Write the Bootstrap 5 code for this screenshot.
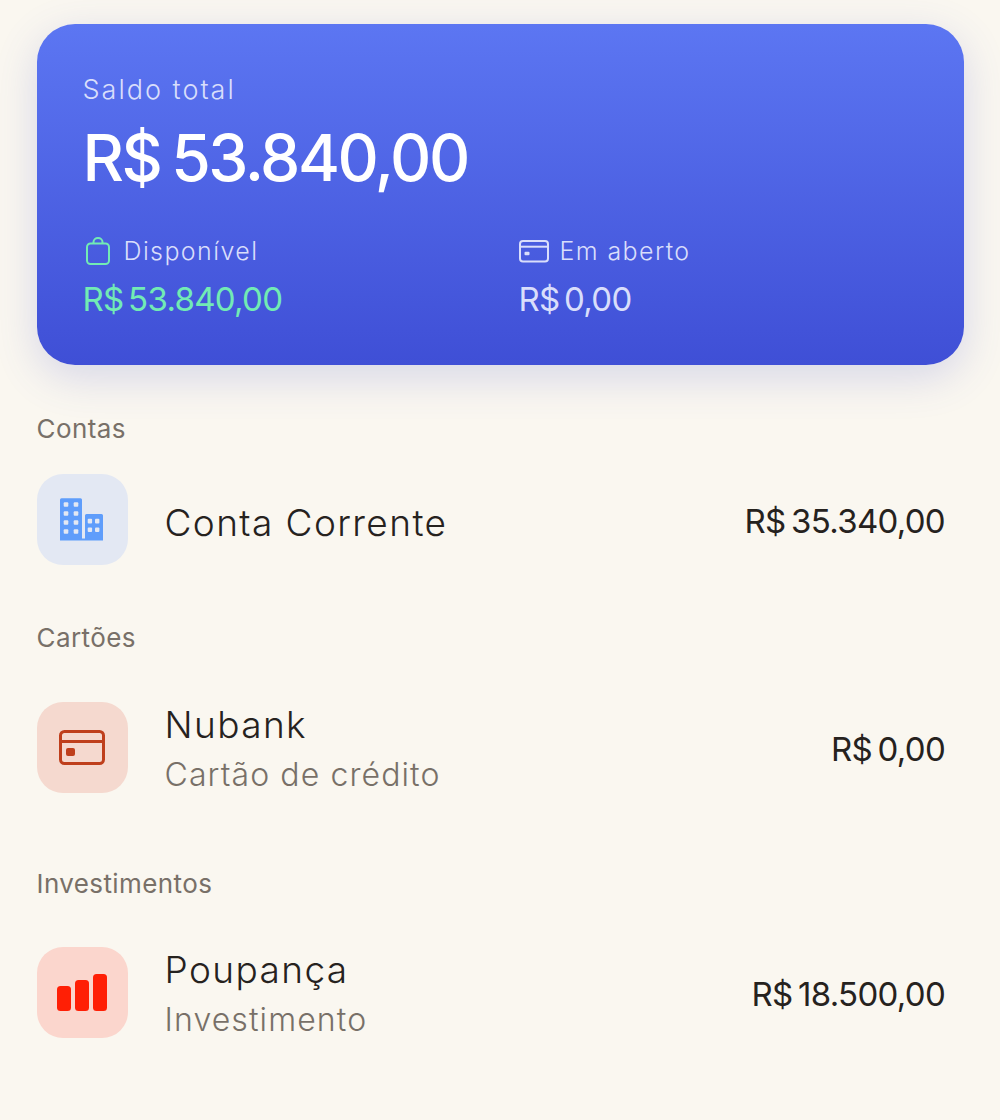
<!DOCTYPE html>
<html lang="pt-BR">
<head>
    <meta charset="UTF-8">
    <meta name="viewport" content="width=device-width, initial-scale=1.0">
    <title>Saldo</title>
    <link href="https://cdn.jsdelivr.net/npm/bootstrap@5.3.0/dist/css/bootstrap.min.css" rel="stylesheet">
    <style>
        body {
            background: #faf7f0;
            font-family: Inter, "Liberation Sans", sans-serif;
            color: #26221e;
        }
        .page-wrap { padding: 24px 36px 0 36.5px; width: 1000px; height: 1120px; overflow: hidden; }

        /* cartao do saldo */
        .balance-card {
            height: 341px;
            border-radius: 38px;
            padding: 47px 46px 0;
            background: linear-gradient(180deg, #5c76f2 0%, #3f4fd6 100%);
            box-shadow: 0 12px 44px rgba(70, 85, 200, .2);
            color: #fff;
        }
        .balance-label { font-size: 27px; line-height: 38px; font-weight: 300; letter-spacing: 2px; color: #d9defb; }
        .balance-total { font-size: 64px; line-height: 76px; font-weight: 500; letter-spacing: -2.4px; word-spacing: -4px; margin-top: 11px; }
        .balance-cols { margin-top: 38px; }
        .balance-col { width: 436px; flex: none; }
        .col-label { font-size: 25px; line-height: 34px; font-weight: 300; letter-spacing: 1.4px; color: #d9defb; }
        .col-label svg { flex: none; }
        .col-label span { margin-left: 3px; }
        .col-value { font-size: 33px; line-height: 44px; font-weight: 400; letter-spacing: -.7px; word-spacing: -4px; margin-top: 9px; color: #d9defb; }
        .col-value.is-green { color: #72ebb4; }

        /* listas */
        .group-label { font-size: 26px; line-height: 32px; font-weight: 400; letter-spacing: .4px; color: #787068; }
        .group-contas { margin-top: 48px; }
        .group-cartoes { margin-top: 57px; }
        .group-invest { margin-top: 75px; }
        .acc-row { padding-right: 19px; }
        .acc-row.first { margin-top: 29px; }
        .acc-row.next { margin-top: 48px; }
        .acc-row.last { margin-top: 47px; }
        .acc-icon { width: 91px; height: 91px; border-radius: 26px; flex: none; margin-right: 37px; }
        .acc-icon.blue { background: #e3e8f3; }
        .acc-icon.peach { background: #f5d9cf; }
        .acc-icon.red { background: #fbd6cd; }
        .acc-name { font-size: 37px; line-height: 46px; font-weight: 300; letter-spacing: 1.4px; color: #26221e; }
        .acc-name.solo { padding-top: 6px; }
        .acc-text { height: 91px; }
        .acc-sub { font-size: 32px; line-height: 42px; font-weight: 300; letter-spacing: 1.1px; color: #787068; margin-top: 6px; }
        .acc-value { font-size: 33px; font-weight: 440; letter-spacing: -.7px; word-spacing: -3px; padding-top: 4px; color: #26221e; }
    </style>
</head>
<body>
    <div class="page-wrap">
        <div class="balance-card">
            <div class="balance-label">Saldo total</div>
            <div class="balance-total">R$ 53.840,00</div>
            <div class="balance-cols d-flex">
                <div class="balance-col">
                    <div class="col-label d-flex align-items-center gap-2">
                        <svg width="30" height="30" viewBox="0 0 30 30" fill="none" stroke="#72ebb4" stroke-width="2"><rect x="4" y="7.500" width="22" height="20.500" rx="3.500"/><path d="M10.500 7.500V6a4.500 4 0 0 1 9 0V7.500"/></svg>
                        <span>Disponível</span>
                    </div>
                    <div class="col-value is-green">R$ 53.840,00</div>
                </div>
                <div class="balance-col">
                    <div class="col-label d-flex align-items-center gap-2">
                        <svg width="30" height="30" viewBox="0 0 30 30" fill="none" stroke="#d9defb" stroke-width="2"><rect x="1" y="5" width="28" height="20.500" rx="3"/><path d="M1 10.700h28"/><rect x="5.500" y="15.700" width="5" height="3.500" rx="1" fill="#d9defb" stroke="none"/></svg>
                        <span>Em aberto</span>
                    </div>
                    <div class="col-value">R$ 0,00</div>
                </div>
            </div>
        </div>

        <div class="group-label group-contas">Contas</div>
        <div class="acc-row first d-flex align-items-center">
            <div class="acc-icon blue d-flex align-items-center justify-content-center">
                <svg width="46" height="46" viewBox="0 0 46 46">
                    <path fill="#5f9dfb" d="M1 2.700a1.500 1.500 0 0 1 1.500-1.500h19a1.500 1.500 0 0 1 1.500 1.500V43.500H1zM26 18.500a1.500 1.500 0 0 1 1.500-1.500h15a1.500 1.500 0 0 1 1.500 1.500V43.500H22v-2h4z"/>
                    <g fill="#e3e8f3">
                        <rect x="4.700" y="5.200" width="4.600" height="4.600" rx="1"/><rect x="14.700" y="5.200" width="4.600" height="4.600" rx="1"/>
                        <rect x="4.700" y="14.200" width="4.600" height="4.600" rx="1"/><rect x="14.700" y="14.200" width="4.600" height="4.600" rx="1"/>
                        <rect x="4.700" y="23.200" width="4.600" height="4.600" rx="1"/><rect x="14.700" y="23.200" width="4.600" height="4.600" rx="1"/>
                        <rect x="4.700" y="32.200" width="4.600" height="4.600" rx="1"/><rect x="14.700" y="32.200" width="4.600" height="4.600" rx="1"/>
                        <rect x="28.700" y="21.800" width="4.400" height="4.600" rx="1"/><rect x="36" y="21.800" width="4.400" height="4.600" rx="1"/>
                        <rect x="28.700" y="30.500" width="4.400" height="4.600" rx="1"/><rect x="36" y="30.500" width="4.400" height="4.600" rx="1"/>
                    </g>
                </svg>
            </div>
            <div class="flex-grow-1 acc-name solo">Conta Corrente</div>
            <div class="acc-value">R$ 35.340,00</div>
        </div>

        <div class="group-label group-cartoes">Cartões</div>
        <div class="acc-row next d-flex align-items-center">
            <div class="acc-icon peach d-flex align-items-center justify-content-center">
                <svg width="46" height="36" viewBox="0 0 46 36" fill="none" stroke="#bf3f1c" stroke-width="3"><rect x="1.500" y="1.500" width="43" height="32" rx="4"/><path d="M1.500 11.500h43"/><rect x="7" y="18" width="9" height="8" rx="2" fill="#bf3f1c" stroke="none"/></svg>
            </div>
            <div class="flex-grow-1 acc-text align-self-start">
                <div class="acc-name">Nubank</div>
                <div class="acc-sub">Cartão de crédito</div>
            </div>
            <div class="acc-value">R$ 0,00</div>
        </div>

        <div class="group-label group-invest">Investimentos</div>
        <div class="acc-row last d-flex align-items-center">
            <div class="acc-icon red d-flex align-items-center justify-content-center">
                <svg width="50" height="37" viewBox="0 0 50 37" fill="#ff1f05"><rect width="14" height="25" y="12" rx="3.500"/><rect x="18" y="6" width="14" height="31" rx="3.500"/><rect x="36" width="14" height="37" rx="3.500"/></svg>
            </div>
            <div class="flex-grow-1 acc-text align-self-start">
                <div class="acc-name">Poupança</div>
                <div class="acc-sub">Investimento</div>
            </div>
            <div class="acc-value">R$ 18.500,00</div>
        </div>
    </div>

    <script src="https://cdn.jsdelivr.net/npm/bootstrap@5.3.0/dist/js/bootstrap.bundle.min.js"></script>
</body>
</html>
